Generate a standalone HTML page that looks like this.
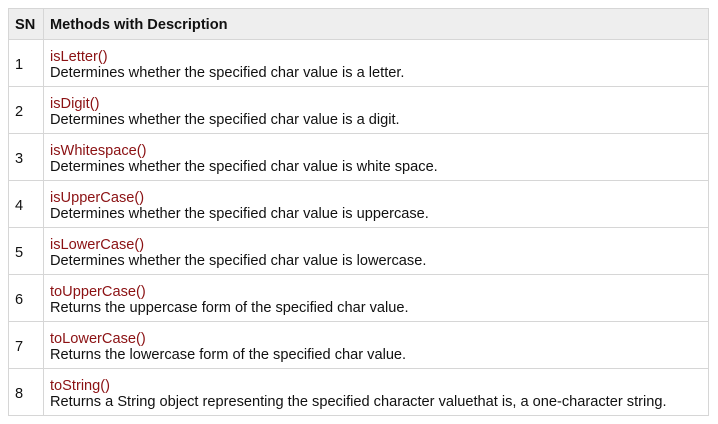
<!DOCTYPE html>
<html><head><style>
body{margin:0;background:#fff;font-family:"Liberation Sans",Arial,sans-serif;font-size:14.6px;color:#111}
table{position:absolute;left:8px;top:8px;width:701px;border-collapse:collapse;border:1px solid #d6d6d6}
td,th{border:1px solid #d6d6d6;padding:0 0 0 6px;text-align:left;vertical-align:middle;line-height:16px}
th{background:#eee;height:29px;padding-top:1px;font-weight:bold}
td{height:43px;padding-top:3px;background:#fff}
td.n{width:28px}
.m{color:#8b1113}
</style></head><body>
<table>
<tr><th class="n">SN</th><th>Methods with Description</th></tr>
<tr><td class="n">1</td><td><span class="m">isLetter()</span><br>Determines whether the specified char value is a letter.</td></tr>
<tr><td class="n">2</td><td><span class="m">isDigit()</span><br>Determines whether the specified char value is a digit.</td></tr>
<tr><td class="n">3</td><td><span class="m">isWhitespace()</span><br>Determines whether the specified char value is white space.</td></tr>
<tr><td class="n">4</td><td><span class="m">isUpperCase()</span><br>Determines whether the specified char value is uppercase.</td></tr>
<tr><td class="n">5</td><td><span class="m">isLowerCase()</span><br>Determines whether the specified char value is lowercase.</td></tr>
<tr><td class="n">6</td><td><span class="m">toUpperCase()</span><br>Returns the uppercase form of the specified char value.</td></tr>
<tr><td class="n">7</td><td><span class="m">toLowerCase()</span><br>Returns the lowercase form of the specified char value.</td></tr>
<tr><td class="n">8</td><td><span class="m">toString()</span><br>Returns a String object representing the specified character valuethat is, a one-character string.</td></tr>
</table>
</body></html>
